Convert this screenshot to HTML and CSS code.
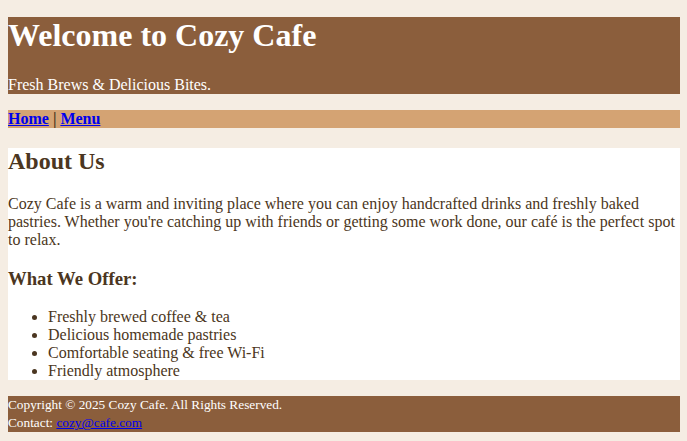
FILE: index.html
```html
<!DOCTYPE html>
<html lang="en">
<head>
<meta charset="utf-8">
<title>Cozy Cafe</title>
<link rel="stylesheet" href="styles.css">
</head>
<body>
  <header class="site-header">
    <h1 class="site-title">Welcome to Cozy Cafe</h1>
    <p class="tagline">Fresh Brews &amp; Delicious Bites.</p>
  </header>
  <nav class="site-nav"><a href="#">Home</a> | <a href="#">Menu</a></nav>
  <main class="content">
    <h2 class="section-title">About Us</h2>
    <p class="intro">Cozy Cafe is a warm and inviting place where you can enjoy handcrafted drinks and freshly baked pastries. Whether you're catching up with friends or getting some work done, our café is the perfect spot to relax.</p>
    <h3 class="sub-title">What We Offer:</h3>
    <ul class="offer-list">
      <li>Freshly brewed coffee &amp; tea</li>
      <li>Delicious homemade pastries</li>
      <li>Comfortable seating &amp; free Wi-Fi</li>
      <li>Friendly atmosphere</li>
    </ul>
  </main>
  <footer class="site-footer">
    <p class="footer-line">Copyright © 2025 Cozy Cafe. All Rights Reserved.</p>
    <p class="footer-line">Contact: <a href="#">cozy@cafe.com</a></p>
  </footer>
</body>
</html>
```

FILE: styles.css
```css
html {
  background: #f5ede3;
}

body {
  margin: 0;
  padding: 17px 7px 8px 8px;
  font-family: "Liberation Serif", "Times New Roman", serif;
  font-size: 16px;
  line-height: 18px;
  color: #4b3621;
  background: #f5ede3;
}

.site-header {
  background: #8b5e3c;
  color: #ffffff;
}

.site-title {
  margin: 0 0 22px;
  font-size: 32px;
  line-height: 37px;
  font-weight: bold;
}

.tagline {
  margin: 16px 0;
}

.site-nav {
  background: #d4a373;
  font-weight: bold;
}

.site-nav a {
  color: #0000ee;
}

.content {
  background: #ffffff;
}

.section-title {
  font-size: 24px;
  line-height: 27px;
  margin: 20px 0;
}

.intro {
  margin: 16px 0;
}

.sub-title {
  font-size: 18.72px;
  line-height: 22px;
  margin: 18.72px 0;
}

.offer-list {
  margin: 16px 0;
  padding-left: 40px;
}

.site-footer {
  margin-top: 16px;
  background: #8b5e3c;
  color: #ffffff;
  font-size: 13.3px;
}

.footer-line {
  margin: 0;
  line-height: 18px;
}

.footer-line a {
  color: #0000ee;
}
```
